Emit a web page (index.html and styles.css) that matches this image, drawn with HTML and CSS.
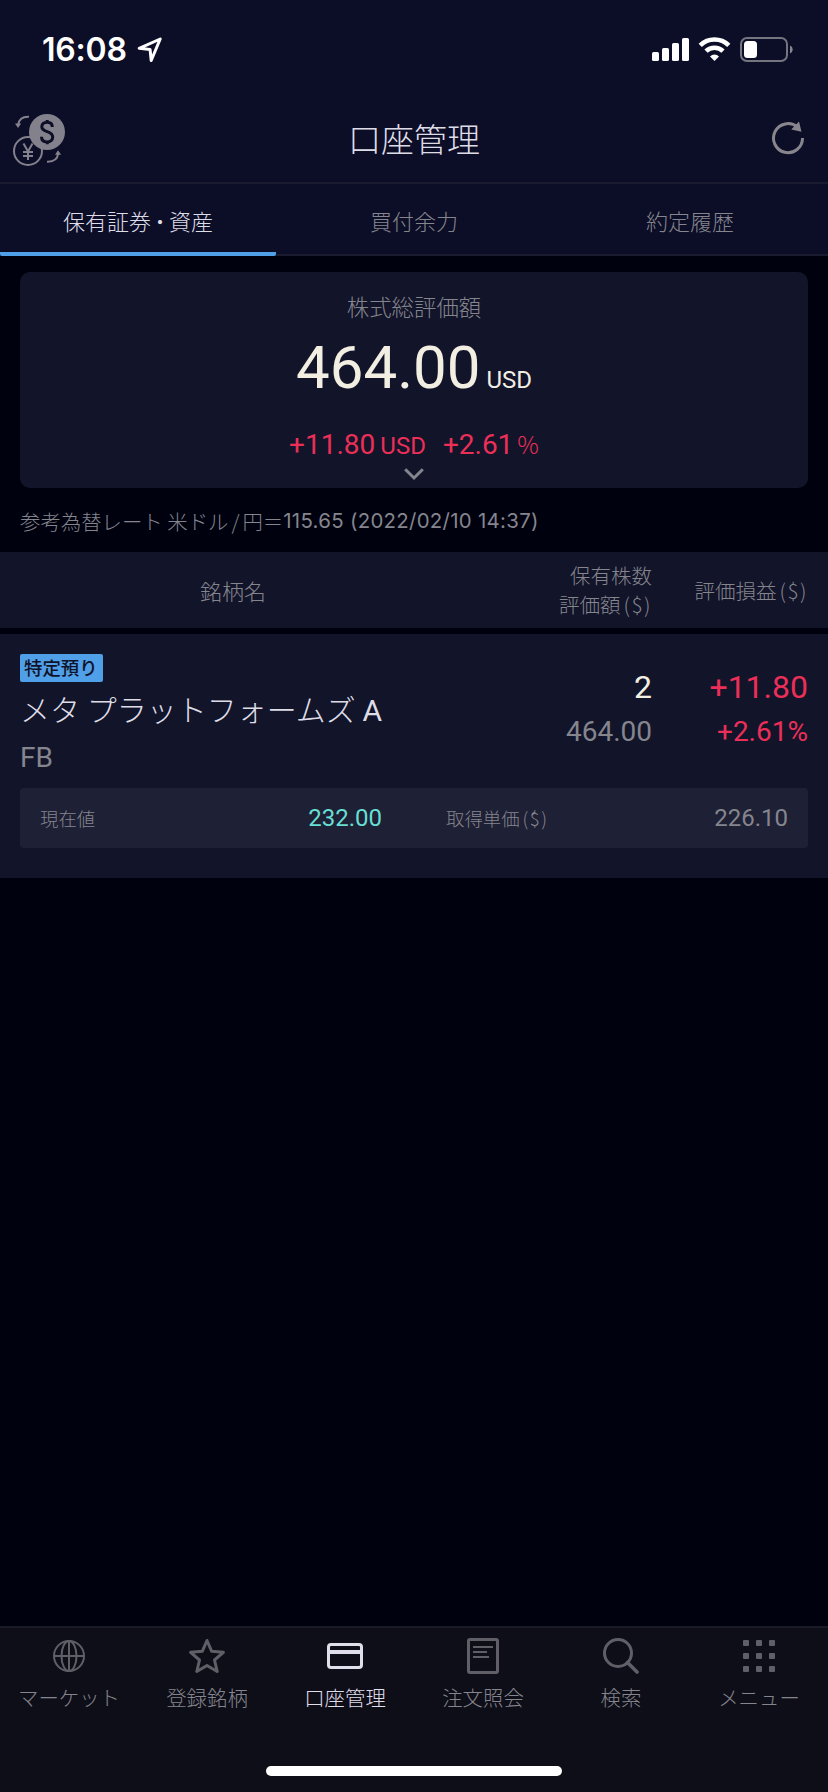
FILE: index.html
```html
<!DOCTYPE html>
<html lang="ja">
<head>
<meta charset="utf-8">
<title>口座管理</title>
<link rel="stylesheet" href="styles.css">
</head>
<body>
<div class="app">
  <header class="status">
    <div class="status-left">
      <span class="clock">16:08</span>
      <svg class="location" width="26" height="26" viewBox="0 0 26 26"><path d="M23.2 2 2.2 11.3l10.900 1.300 1.100 10.900z" fill="none" stroke="#fff" stroke-width="3" stroke-linejoin="round"/></svg>
    </div>
    <svg class="signals" width="142" height="26" viewBox="0 0 142 26">
      <g fill="#fff"><rect x="0" y="15" width="7" height="9" rx="1.600"/><rect x="10" y="11" width="7" height="13" rx="1.600"/><rect x="20" y="6" width="7" height="18" rx="1.600"/><rect x="30" y="1" width="7" height="23" rx="1.600"/></g>
      <g fill="none" stroke="#fff" stroke-width="4.600"><path d="M48.200 8.300a20.500 20.500 0 0 1 28.600 0"/><path d="M54 14.200a12.200 12.200 0 0 1 17 0"/></g>
      <path d="M62.500 24l-4.500-4.600a6.500 6.500 0 0 1 9 0z" fill="#fff"/>
      <rect x="89" y="1" width="46" height="23" rx="6" fill="none" stroke="#74757f" stroke-width="2"/>
      <rect x="92" y="4" width="13" height="17" rx="3.500" fill="#fff"/>
      <path d="M138 8.500a4.300 4.300 0 0 1 0 8z" fill="#85868f"/>
    </svg>
  </header>
  <nav class="titlebar">
    <svg class="currency" width="54" height="54" viewBox="0 0 54 54">
      <g fill="none" stroke="#82818c" stroke-width="2"><circle cx="15" cy="38" r="14"/><path d="M16 3.800C10 3.500 6 6 5 12M34 48.700c7 .3 10.500-3 11.200-8"/></g>
      <path d="M2 10.500h6.200L5 15zM42 41.700h6.200L45 37.200z" fill="#82818c"/>
      <circle cx="34" cy="19" r="18" fill="#82818c"/>
      <path d="M39.300 14c0-3-2-4.800-5.200-4.800s-5.300 1.800-5.300 4.600c0 6.200 10.900 3.600 10.900 10.200 0 3-2.300 4.900-5.500 4.900-3.600 0-5.700-2-5.700-5.200M34.200 7v3M34.200 28v3.200" fill="none" stroke="#0c0d26" stroke-width="3"/>
      <path d="M10.500 30.500 15 38.500l4.500-8M15 38v9M10 39h10M10 43h10" fill="none" stroke="#82818c" stroke-width="2"/>
    </svg>
    <h1 class="title">口座管理</h1>
    <svg class="refresh" width="34" height="34" viewBox="0 0 34 34"><path d="M31.500 17A14.500 14.500 0 1 1 26.500 6.200" fill="none" stroke="#87868d" stroke-width="3"/><path d="M28 .5 30.500 10.800 20.200 8.500z" fill="#87868d"/></svg>
  </nav>
  <div class="tabs">
    <div class="tab tab-on">保有証券<span class="dot">・</span>資産</div>
    <div class="tab">買付余力</div>
    <div class="tab">約定履歴</div>
  </div>
  <main class="content">
    <section class="card">
      <div class="card-label">株式総評価額</div>
      <div class="total">464.00<span class="total-unit">USD</span></div>
      <div class="change">+11.80<span class="change-unit">USD</span><span class="rate">+2.61<span class="percent">%</span></span></div>
      <svg class="chevron" width="22" height="14" viewBox="0 0 22 14"><path d="M2.200 2.200 11 11l8.800-8.800" fill="none" stroke="#85858e" stroke-width="3"/></svg>
    </section>
    <div class="fx"><span class="fx-jp">参考為替レート 米ドル</span><span class="fx-slash">/</span><span class="fx-jp fx-yen">円＝</span><span class="fx-num">115.65 (2022/02/10 14:37)</span></div>
    <div class="thead">
      <div class="th-name">銘柄名</div>
      <div class="th-qty"><div>保有株数</div><div>評価額<span class="paren">($)</span></div></div>
      <div class="th-pl">評価損益<span class="paren">($)</span></div>
    </div>
    <section class="holding">
      <div class="holding-top">
        <div class="holding-name">
          <span class="badge">特定預り</span>
          <div class="name">メタ プラットフォームズ <span class="latin">A</span></div>
          <div class="ticker">FB</div>
        </div>
        <div class="qty"><div class="big">2</div><div class="small">464.00</div></div>
        <div class="pl"><div class="big">+11.80</div><div class="small">+2.61%</div></div>
      </div>
      <div class="prices">
        <div class="price"><span class="price-label">現在値</span><span class="price-value now">232.00</span></div>
        <div class="price"><span class="price-label">取得単価<span class="paren">($)</span></span><span class="price-value">226.10</span></div>
      </div>
    </section>
  </main>
  <footer class="footer">
    <div class="menu">
      <div class="item">
        <svg class="icon" width="36" height="36" viewBox="0 0 36 36" fill="none" stroke="#605f68" stroke-width="2"><circle cx="18" cy="18" r="15"/><ellipse cx="18" cy="18" rx="7.500" ry="15"/><path d="M18 3v30M3 18h30"/></svg>
        <span>マーケット</span>
      </div>
      <div class="item">
        <svg class="icon" width="36" height="36" viewBox="0 0 36 36" fill="none" stroke="#605f68" stroke-width="3" stroke-linejoin="round"><path d="M18 2.500 22.600 13.200 34.400 14.300 25.500 22 28.200 33.500 18 27.500 7.800 33.500 10.500 22 1.600 14.300 13.400 13.200z"/></svg>
        <span>登録銘柄</span>
      </div>
      <div class="item item-on">
        <svg class="icon" width="36" height="36" viewBox="0 0 36 36" fill="none" stroke="#e0deea" stroke-width="3"><rect x="1.500" y="6.500" width="33" height="23" rx="2.500"/><path d="M2 14h32" stroke-width="4"/></svg>
        <span>口座管理</span>
      </div>
      <div class="item">
        <svg class="icon" width="36" height="36" viewBox="0 0 36 36" fill="none" stroke="#605f68" stroke-width="3"><rect x="3.500" y="1.500" width="29" height="33" rx="1.500"/><path d="M8 9h20M8 14h14M8 19h16" stroke-width="2"/></svg>
        <span>注文照会</span>
      </div>
      <div class="item">
        <svg class="icon" width="36" height="36" viewBox="0 0 36 36" fill="none" stroke="#605f68" stroke-width="3"><circle cx="15" cy="15" r="13.500"/><path d="m24.500 24.500 9.500 9.500" stroke-width="3.600" stroke-linecap="round"/></svg>
        <span>検索</span>
      </div>
      <div class="item">
        <svg class="icon" width="36" height="36" viewBox="0 0 36 36" fill="#605f68"><rect x="2" y="2" width="6" height="6" rx="1"/><rect x="15" y="2" width="6" height="6" rx="1"/><rect x="28" y="2" width="6" height="6" rx="1"/><rect x="2" y="15" width="6" height="6" rx="1"/><rect x="15" y="15" width="6" height="6" rx="1"/><rect x="28" y="15" width="6" height="6" rx="1"/><rect x="2" y="28" width="6" height="6" rx="1"/><rect x="15" y="28" width="6" height="6" rx="1"/><rect x="28" y="28" width="6" height="6" rx="1"/></svg>
        <span>メニュー</span>
      </div>
    </div>
    <div class="home"></div>
  </footer>
</div>
</body>
</html>
```

FILE: styles.css
```css
* { box-sizing: border-box; }
body {
  margin: 0;
  background: #00010f;
  color: #85858e;
  font-family: "Noto Sans CJK JP", sans-serif;
  font-weight: 300;
}
.app { width: 828px; height: 1792px; display: flex; flex-direction: column; overflow: hidden; }

.status {
  height: 98px;
  padding: 36px 34px 0 42px;
  display: flex;
  justify-content: space-between;
  align-items: flex-start;
  background: #0c0d26;
}
.status-left { display: flex; gap: 9px; }
.clock { width: 86px; color: #fff; font: 600 32px/28px Inter, sans-serif; letter-spacing: -0.2px; white-space: nowrap; }
.signals { margin-top: 1px; }
.location { margin-top: 1px; }

.titlebar {
  height: 86px;
  padding: 0 23px 0 13px;
  display: grid;
  grid-template-columns: 54px 1fr 34px;
  border-bottom: 2px solid #191a30;
  background: #0c0d26;
}
.currency { margin-top: 15px; }
.refresh { margin-top: 23px; }
.title { margin: 18px 0 0; padding-right: 10px; font-size: 33px; line-height: 44px; font-weight: 300; color: #dedce6; text-align: center; }

.tabs { height: 72px; display: flex; background: #0c0d26; border-bottom: 2px solid #191a30; }
.tab { flex: 1; height: 72px; font-size: 22px; line-height: 72px; text-align: center; }
.tab-on { color: #dedce6; border-bottom: 4px solid #4fa0e8; border-radius: 2px; }
.dot { margin: 0 -2px; }

.content { flex: 1; }
.card {
  margin: 16px 20px 0;
  height: 216px;
  padding-top: 18px;
  border-radius: 10px;
  background: #121429;
  display: flex;
  flex-direction: column;
  align-items: center;
}
.card-label { font-size: 22.4px; line-height: 32px; }
.total { margin-top: 12px; font: 400 60px/68px Roboto, sans-serif; color: #f2efe2; }
.total-unit { margin-left: 6px; font-size: 24px; }
.change { margin-top: 14px; font: 400 28px/34px Roboto, sans-serif; color: #eb2f58; }
.change-unit { margin-left: 5px; font-size: 24px; }
.rate { margin-left: 17px; }
.percent { margin-left: 4px; font: 300 24px "Noto Sans CJK JP", sans-serif; line-height: 1; }
.chevron { margin-top: 4px; }
.fx { margin: 18px 20px 0; height: 46px; display: flex; line-height: 30px; font-size: 20.4px; white-space: nowrap; }
.fx-slash { padding: 0 3px; }
.fx-num { font-family: Inter, sans-serif; font-weight: 400; letter-spacing: 0.3px; }

.thead {
  height: 76px;
  padding: 0 20px;
  display: grid;
  grid-template-columns: 426px 206px 156px;
  align-items: center;
  background: #121429;
  font-size: 20.500px;
}
.th-name { font-size: 22px; text-align: center; }
.th-qty { line-height: 29px; text-align: right; }
.th-pl { text-align: right; }
.paren { margin-left: 3px; letter-spacing: 1.500px; }

.holding { margin-top: 6px; height: 244px; padding: 20px 20px 0; background: #121429; }
.holding-top { height: 134px; display: grid; grid-template-columns: 426px 206px 156px; }
.badge { display: block; width: 83px; height: 28px; padding-left: 4px; border-radius: 2px; background: #4fa0e8; color: #10122a; font-size: 18.400px; line-height: 27px; font-weight: 500; white-space: nowrap; }
.name { margin-top: 6px; font-size: 30px; line-height: 40px; color: #dedce6; white-space: nowrap; }
.latin { font-family: Roboto, sans-serif; font-weight: 400; }
.ticker { margin-top: 10px; font: 400 28px/34px Roboto, sans-serif; }
.qty, .pl { padding-top: 14px; text-align: right; font-family: Roboto, sans-serif; font-weight: 400; }
.big { font-size: 32px; line-height: 38px; }
.small { margin-top: 9px; font-size: 28px; line-height: 34px; }
.qty .big { color: #f2efe2; }
.pl { color: #eb2f58; }
.prices { height: 60px; padding: 0 20px; display: grid; grid-template-columns: 1fr 1fr; column-gap: 64px; align-items: center; border-radius: 4px; background: #1e2035; }
.price { display: flex; justify-content: space-between; line-height: 30px; }
.price-label { font-size: 18.400px; }
.price-value { font-family: Roboto, sans-serif; font-size: 24px; font-weight: 400; }
.now { color: #67dfd2; }

.footer { height: 166px; border-top: 2px solid #1a1a26; background: #0e0e18; display: flex; flex-direction: column; align-items: center; }
.menu { width: 828px; height: 138px; padding-top: 10px; display: flex; }
.item { flex: 1; display: flex; flex-direction: column; align-items: center; font-size: 20.400px; line-height: 30px; white-space: nowrap; }
.item span { margin-top: 8px; }
.item-on { color: #e0deea; }
.home { width: 296px; height: 10px; border-radius: 5px; background: #fff; }
```
